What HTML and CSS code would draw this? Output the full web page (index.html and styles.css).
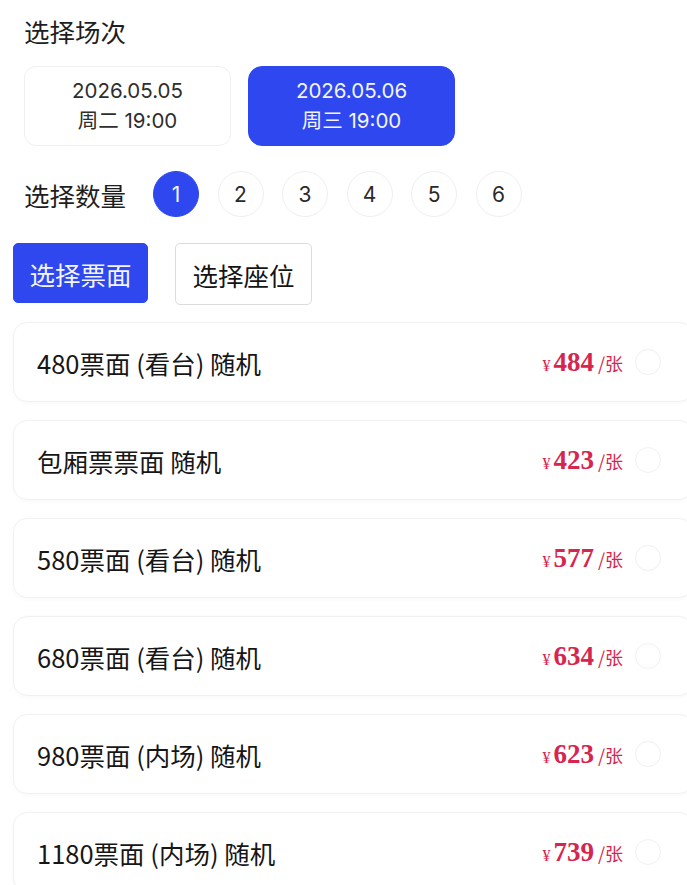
FILE: index.html
```html
<!DOCTYPE html>
<html lang="zh">
<head>
<meta charset="utf-8">
<link rel="stylesheet" href="styles.css">
</head>
<body>
<div class="page">
  <div class="title">选择场次</div>
  <div class="dates">
    <div class="date">
      <div>2026.05.05</div>
      <div>周二 19:00</div>
    </div>
    <div class="date active">
      <div>2026.05.06</div>
      <div>周三 19:00</div>
    </div>
  </div>
  <div class="qty">
    <div class="qty-label">选择数量</div>
    <div class="nums">
      <div class="num active">1</div>
      <div class="num">2</div>
      <div class="num">3</div>
      <div class="num">4</div>
      <div class="num">5</div>
      <div class="num">6</div>
    </div>
  </div>
  <div class="tabs">
    <div class="tab active">选择票面</div>
    <div class="tab">选择座位</div>
  </div>
  <div class="list">
    <div class="card"><div class="name">480票面 (看台) 随机</div><div class="price"><span class="yen">¥</span><span class="amt">484</span><span class="unit">/张</span></div><div class="radio"></div></div>
    <div class="card"><div class="name">包厢票票面 随机</div><div class="price"><span class="yen">¥</span><span class="amt">423</span><span class="unit">/张</span></div><div class="radio"></div></div>
    <div class="card"><div class="name">580票面 (看台) 随机</div><div class="price"><span class="yen">¥</span><span class="amt">577</span><span class="unit">/张</span></div><div class="radio"></div></div>
    <div class="card"><div class="name">680票面 (看台) 随机</div><div class="price"><span class="yen">¥</span><span class="amt">634</span><span class="unit">/张</span></div><div class="radio"></div></div>
    <div class="card"><div class="name">980票面 (内场) 随机</div><div class="price"><span class="yen">¥</span><span class="amt">623</span><span class="unit">/张</span></div><div class="radio"></div></div>
    <div class="card"><div class="name">1180票面 (内场) 随机</div><div class="price"><span class="yen">¥</span><span class="amt">739</span><span class="unit">/张</span></div><div class="radio"></div></div>
  </div>
</div>
</body>
</html>
```

FILE: styles.css
```css
html, body {
  margin: 0;
  padding: 0;
  background: #ffffff;
  overflow: hidden;
}
body {
  width: 687px;
  height: 885px;
  font-family: "Noto Sans CJK SC", "Noto Sans", sans-serif;
  color: #1a1a1a;
}
.page {
  padding-top: 13px;
}
.title {
  margin-left: 24px;
  font-size: 25.5px;
  line-height: 36px;
  color: #1e1e1e;
}
.dates {
  display: flex;
  gap: 17px;
  margin: 17px 0 0 24px;
}
.date {
  width: 207px;
  height: 80px;
  box-sizing: border-box;
  border: 1px solid #f0f0f0;
  border-radius: 12px;
  display: flex;
  flex-direction: column;
  align-items: center;
  justify-content: center;
  font-family: "Inter", "Noto Sans CJK SC", sans-serif;
  font-size: 20.5px;
  line-height: 30px;
  color: #2e2e2e;
}
.date.active {
  background: #2e47ee;
  border-color: #2e47ee;
  border-radius: 14px;
  color: #f2f4ff;
}
.qty {
  display: flex;
  align-items: center;
  margin: 25px 0 0 24px;
  gap: 27px;
}
.qty-label {
  font-size: 25.5px;
  color: #1e1e1e;
}
.nums {
  display: flex;
  gap: 18.5px;
}
.num {
  width: 46px;
  height: 46px;
  box-sizing: border-box;
  border-radius: 50%;
  border: 1.5px solid #efefef;
  display: flex;
  align-items: center;
  justify-content: center;
  font-family: "Inter", sans-serif;
  font-size: 21px;
  color: #2a2a2a;
}
.num.active {
  background: #2e47ee;
  border-color: #2e47ee;
  color: #f2f4ff;
}
.tabs {
  display: flex;
  align-items: flex-start;
  gap: 27px;
  margin: 26px 0 0 13px;
}
.tab {
  width: 137px;
  height: 62px;
  box-sizing: border-box;
  border: 1.5px solid #dcdcdc;
  border-radius: 5px;
  display: flex;
  align-items: center;
  justify-content: center;
  font-size: 25.5px;
  color: #141414;
}
.tab.active {
  width: 135px;
  height: 60px;
  background: #2e47ee;
  border-color: #2e47ee;
  color: #f2f4ff;
}
.list {
  display: flex;
  flex-direction: column;
  gap: 18px;
  margin: 17px 0 0 13px;
}
.card {
  width: 680px;
  height: 80px;
  box-sizing: border-box;
  border: 1px solid #f1f1f1;
  border-radius: 14px;
  box-shadow: 0 1px 4px rgba(0, 0, 0, 0.03);
  display: flex;
  align-items: center;
  padding: 0 0 0 23px;
}
.name {
  flex: 1;
  font-size: 25.5px;
  color: #161616;
}
.price {
  display: flex;
  align-items: baseline;
  color: #d6264f;
}
.yen {
  font-family: "Liberation Serif", serif;
  font-size: 16px;
  margin-right: 3px;
}
.amt {
  font-family: "Liberation Serif", serif;
  font-weight: bold;
  font-size: 27px;
}
.unit {
  font-size: 18px;
  margin-left: 4px;
}
.radio {
  width: 26px;
  height: 26px;
  box-sizing: border-box;
  border-radius: 50%;
  border: 1.5px solid #f0f0f0;
  margin: 0 31px 0 12px;
}
```
